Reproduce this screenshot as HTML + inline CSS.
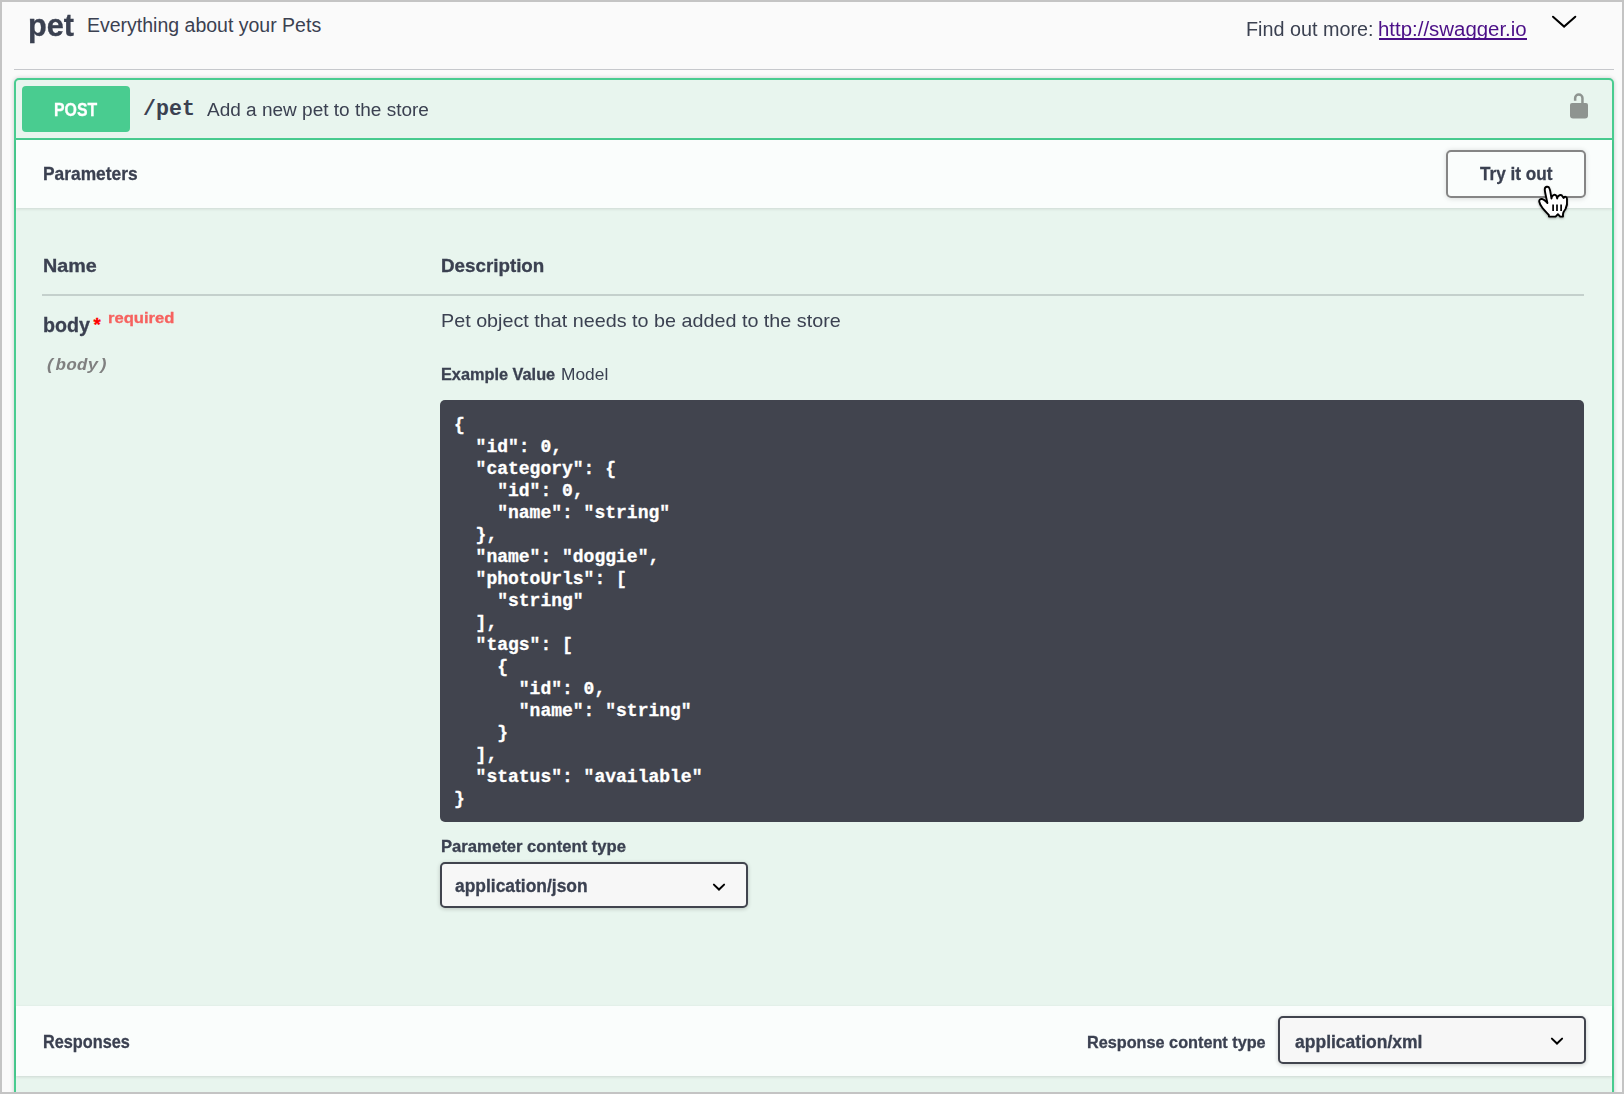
<!DOCTYPE html>
<html><head><meta charset="utf-8">
<style>
html,body{margin:0;padding:0;}
body{width:1624px;height:1094px;position:relative;overflow:hidden;background:#fafafa;font-family:"Liberation Sans",sans-serif;color:#3b4151;}
.a{position:absolute;white-space:pre;line-height:1;transform-origin:0 0;}
.b{font-weight:bold;-webkit-text-stroke:0.3px currentColor;}
.m.b{-webkit-text-stroke:0;}
.m{font-family:"Liberation Mono",monospace;}
#frame{position:absolute;left:0;top:0;width:1620px;height:1090px;border:2px solid #c4c4c4;z-index:50;pointer-events:none;}
#tagline{position:absolute;left:14px;top:69px;width:1600px;height:1px;background:#c6c8cc;}
#op{position:absolute;left:14px;top:78px;width:1596px;height:1040px;border:2px solid #49cc90;border-radius:5px;background:#e8f5ee;box-shadow:0 0 4px rgba(0,0,0,.19);}
#sumline{position:absolute;left:14px;top:138px;width:1600px;height:2px;background:#49cc90;}
#post{position:absolute;left:22px;top:86px;width:108px;height:46px;background:#49cc90;border-radius:4px;}
.sec{position:absolute;left:16px;width:1596px;background:#fafdfc;box-shadow:0 1px 3px rgba(0,0,0,.12);}
#tryit{position:absolute;left:1446px;top:150px;width:136px;height:44px;border:2px solid #858585;border-radius:5px;box-shadow:0 0.5px 5px rgba(0,0,0,.13);}
#thline{position:absolute;left:42px;top:294px;width:1542px;height:2px;background:#c4d0cc;}
#code{position:absolute;left:440px;top:400px;width:1144px;height:422px;background:#41444e;border-radius:5px;}
.sel{position:absolute;border:2px solid #41444e;border-radius:5px;background:#f7f7f7;box-shadow:0 1px 4px rgba(0,0,0,.2);}
</style></head><body>
<div id="frame"></div>

<!-- tag header -->
<div class="a b" style="left:27.8px;top:9.9px;font-size:31.5px;transform:scaleX(.975);">pet</div>
<div class="a" style="left:87px;top:16px;font-size:19.5px;">Everything about your Pets</div>
<div class="a" style="left:1246px;top:20px;font-size:19.5px;transform:scaleX(1.015);">Find out more:</div>
<div class="a" style="left:1378px;top:20px;font-size:19.5px;color:#4b0f87;transform:scaleX(1.047);">http://swagger.io</div>
<div style="position:absolute;left:1379px;top:38px;width:148px;height:2px;background:#4b0f87;"></div>
<svg style="position:absolute;left:1550px;top:13px;" width="30" height="18"><polyline points="3,3.7 14.1,13.6 25.3,3.7" fill="none" stroke="#000" stroke-width="2" stroke-linecap="round" stroke-linejoin="miter"/></svg>
<div id="tagline"></div>

<!-- opblock -->
<div id="op"></div>
<div id="sumline"></div>
<div id="post"></div>
<div class="a b" style="left:54.2px;top:101px;font-size:18.6px;color:#fff;transform:scaleX(.852);">POST</div>
<div class="a b m" style="left:143px;top:99px;font-size:21.6px;">/pet</div>
<div class="a" style="left:207px;top:101px;font-size:18px;transform:scaleX(1.056);">Add a new pet to the store</div>
<svg style="position:absolute;left:1568px;top:91px;" width="22" height="30" viewBox="0 0 22 30">
<path d="M7.15,9.8 V7.1 A3.65,3.65 0 0 1 14.45,7.1 V13" fill="none" stroke="#8e9490" stroke-width="2.5"/>
<path d="M4,12 H18 A2,2 0 0 1 20,14 V24.4 A3,3 0 0 1 17,27.4 H5 A3,3 0 0 1 2,24.4 V14 A2,2 0 0 1 4,12 Z" fill="#8e9490"/>
</svg>

<!-- parameters header -->
<div class="sec" style="top:140px;height:68px;"></div>
<div class="a b" style="left:43px;top:165px;font-size:18.6px;transform:scaleX(.934);">Parameters</div>
<div id="tryit"></div>
<div class="a b" style="left:1480px;top:165px;font-size:18.6px;transform:scaleX(.923);">Try it out</div>

<!-- table -->
<div class="a b" style="left:43px;top:258px;font-size:17.8px;transform:scaleX(1.11);">Name</div>
<div class="a b" style="left:441px;top:258px;font-size:17.8px;transform:scaleX(1.056);">Description</div>
<div id="thline"></div>
<div class="a b" style="left:43px;top:314px;font-size:21px;transform:scaleX(.936);">body</div>
<div class="a b" style="left:93.5px;top:315.5px;font-size:18.5px;color:#f00;">*</div>
<div class="a b" style="left:108px;top:310px;font-size:15.5px;color:#f6625f;transform:scaleX(1.07);">required</div>
<div class="a b m" style="left:45px;top:358px;font-size:16.5px;font-style:italic;color:#808080;transform:scaleX(1.07);">(body)</div>
<div class="a" style="left:441px;top:313px;font-size:17.9px;transform:scaleX(1.104);">Pet object that needs to be added to the store</div>
<div class="a b" style="left:441px;top:366px;font-size:16.5px;transform:scaleX(.988);">Example Value</div>
<div class="a" style="left:561px;top:365.5px;font-size:17px;transform:scaleX(1.02);">Model</div>

<div id="code"></div>
<div class="a b m" style="left:454px;top:414px;font-size:18px;line-height:22px;color:#fff;-webkit-text-stroke:0.3px #fff;">{
  "id": 0,
  "category": {
    "id": 0,
    "name": "string"
  },
  "name": "doggie",
  "photoUrls": [
    "string"
  ],
  "tags": [
    {
      "id": 0,
      "name": "string"
    }
  ],
  "status": "available"
}</div>

<div class="a b" style="left:441px;top:837.5px;font-size:16.5px;transform:scaleX(1.009);">Parameter content type</div>
<div class="sel" style="left:440px;top:862px;width:304px;height:42px;"></div>
<div class="a b" style="left:455px;top:877px;font-size:18px;transform:scaleX(.968);">application/json</div>
<svg style="position:absolute;left:710.2px;top:880.8px;" width="18" height="14"><polyline points="3.9,3.6 9,8.5 14.1,3.6" fill="none" stroke="#000" stroke-width="2" stroke-linecap="round"/></svg>

<!-- responses header -->
<div class="sec" style="top:1006px;height:70px;"></div>
<div class="a b" style="left:43px;top:1033px;font-size:18.6px;transform:scaleX(.875);">Responses</div>
<div class="a b" style="left:1087px;top:1033.7px;font-size:16.5px;transform:scaleX(.984);">Response content type</div>
<div class="sel" style="left:1278px;top:1016px;width:304px;height:44px;"></div>
<div class="a b" style="left:1295px;top:1032.5px;font-size:18px;transform:scaleX(.973);">application/xml</div>
<svg style="position:absolute;left:1548px;top:1035px;" width="18" height="14"><polyline points="3.9,3.6 9,8.5 14.1,3.6" fill="none" stroke="#000" stroke-width="2" stroke-linecap="round"/></svg>

<!-- cursor -->
<svg style="position:absolute;left:1530px;top:176px;z-index:40;filter:drop-shadow(0.3px 1px 1px rgba(0,0,0,.3));" width="50" height="50" viewBox="0 0 50 50">
<path d="M17.4,27 C16,20 14.6,15.5 14.8,13 C15,10.3 18.6,10 19.5,12.5 C20.5,15 20.8,19 21.5,22.5 C21.5,19 25,17.6 26.5,20 L27.2,22.5 C27.5,19 31.5,18 32.5,20.5 L33.6,22 C34.5,20 37,20.5 37,23 C37.5,27 36.5,31 35.5,33 C34,35 33,36.5 33,38 L33,40.6 L30.2,40.6 L27.9,38.2 L25.6,40.6 L19,40.6 L18.8,39 C17,37 14,34 12.5,32 C11,30 9.5,27.5 9.2,25.5 C9,23.5 10.5,22.8 12,23 C14,23.3 16,25.5 17.4,27 Z" fill="#fff" stroke="#000" stroke-width="1.9" stroke-linejoin="round"/>
<path d="M23.1,28.6 V35 M27,28.6 V35 M31.1,28.6 V35" stroke="#000" stroke-width="1.7"/>
</svg>
</body></html>
